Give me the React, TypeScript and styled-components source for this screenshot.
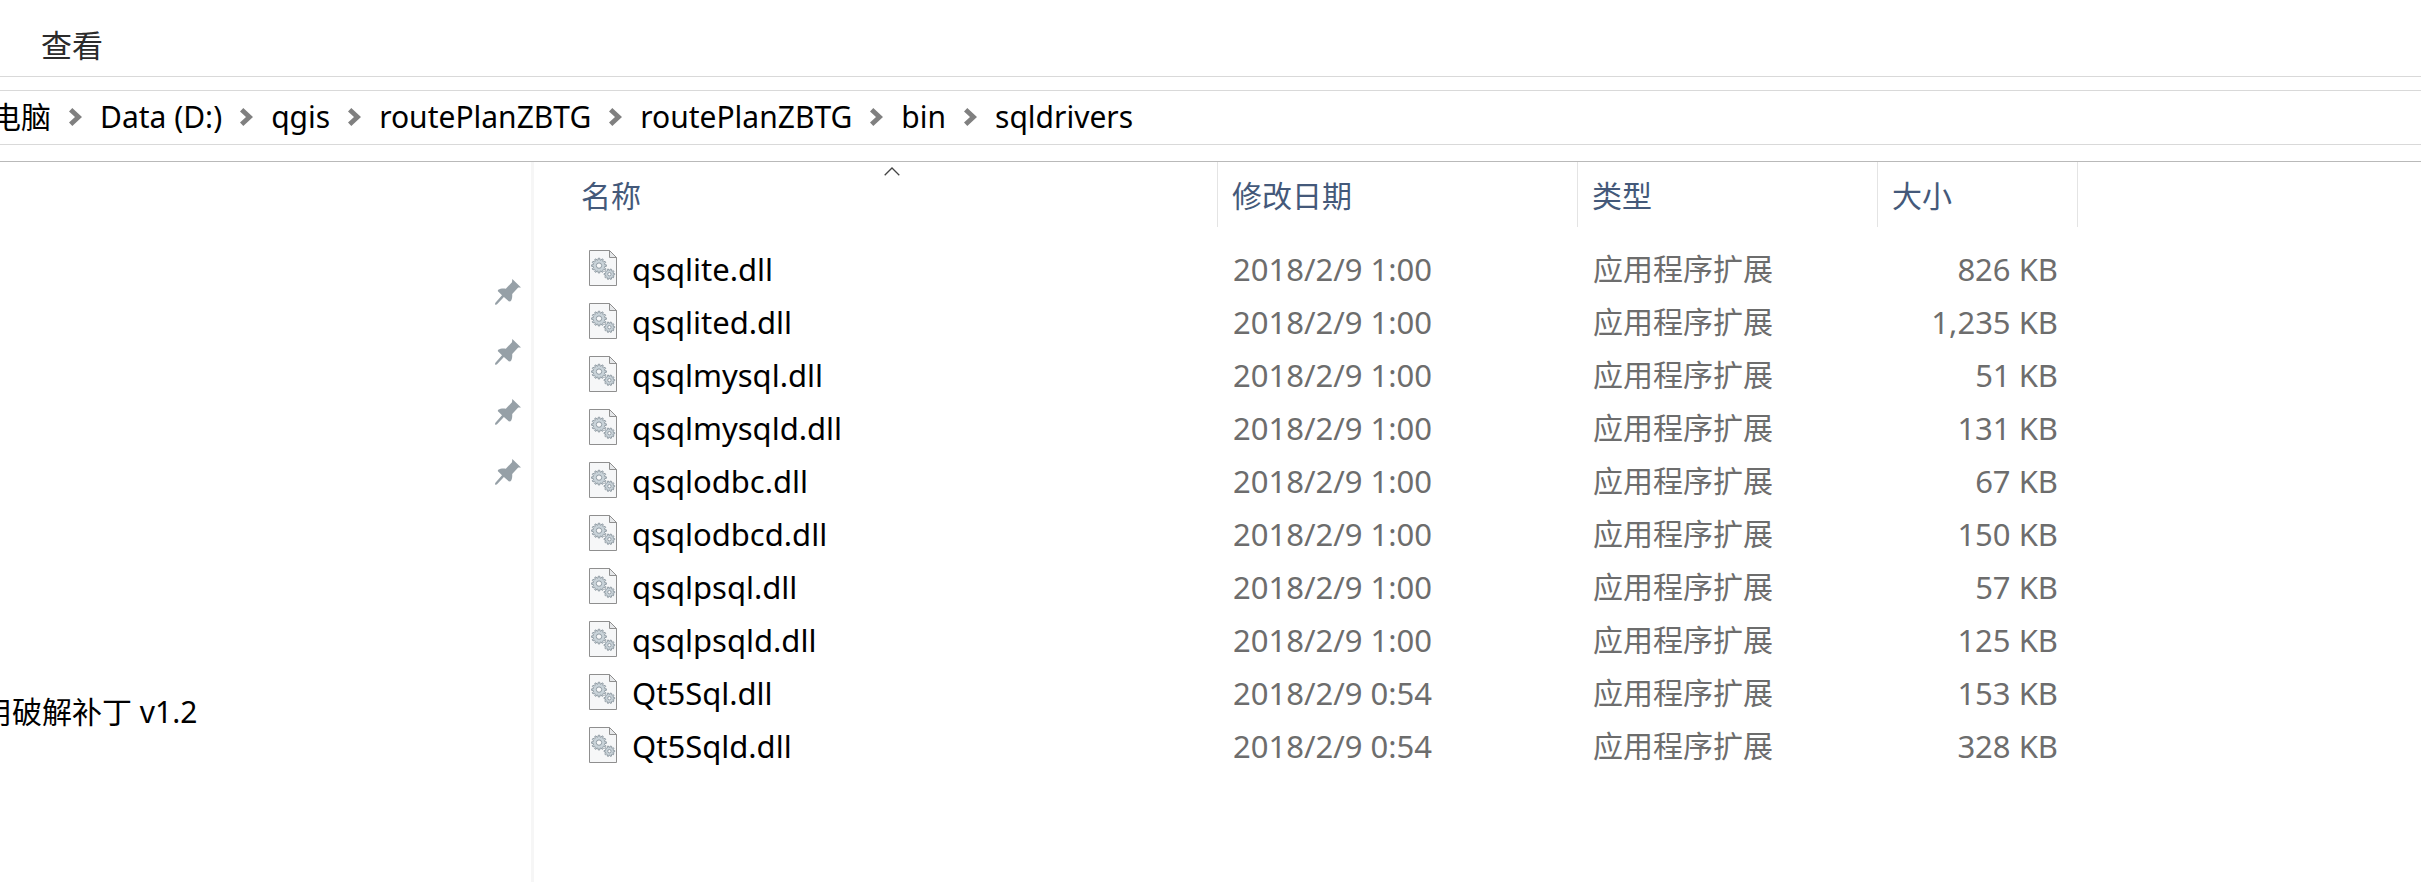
import React from 'react';
import styled, { createGlobalStyle } from 'styled-components';

const GlobalStyle = createGlobalStyle`
  * { box-sizing: border-box; }
  body {
    margin: 0;
    background: #ffffff;
    color: #000000;
    font-family: "Noto Sans", "Noto Sans CJK SC", sans-serif;
    font-size: 30px;
    line-height: 40px;
  }
  button {
    font: inherit;
    color: inherit;
    background: none;
    border: 0;
    padding: 0;
    margin: 0;
    cursor: pointer;
  }
`;

const Window = styled.div`
  display: flex;
  flex-direction: column;
  min-height: 100vh;
  overflow: hidden;
`;

const Ribbon = styled.div`
  display: flex;
  align-items: center;
  height: 77px;
  padding: 14px 41px 0;
  border-bottom: 1px solid #d9d9d9;
  color: #2b2b2b;
  font-size: 31px;
`;

const AddressBar = styled.nav`
  margin-top: 13px;
  border: solid #d9d9d9;
  border-width: 1px 0;
`;

const Crumbs = styled.ol`
  display: flex;
  align-items: center;
  gap: 18px;
  height: 53px;
  margin: 0 0 0 -9px;
  padding: 0 0 2px;
  list-style: none;
`;

const Crumb = styled.li`
  display: flex;
  align-items: center;
  gap: 18px;
  white-space: nowrap;
`;

const CrumbLink = styled.a`
  color: inherit;
  text-decoration: none;
`;

const Body = styled.div`
  display: flex;
  flex: 1;
  margin-top: 16px;
  border-top: 1px solid #b9b9b9;
`;

const Sidebar = styled.aside`
  flex: none;
  width: 534px;
  padding: 100px 10px 0 0;
  border-right: 3px solid #f6f6f6;
`;

const QuickList = styled.ul`
  margin: 0;
  padding: 0;
  list-style: none;
`;

const QuickItem = styled.li`
  display: flex;
  align-items: center;
  justify-content: space-between;
  height: 60px;
`;

const QuickLabel = styled.span`
  margin-left: -18px;
  white-space: nowrap;
`;

const Content = styled.main`
  flex: 1;
  padding-left: 33px;
`;

const FileTable = styled.table`
  width: 1511px;
  table-layout: fixed;
  border-collapse: collapse;
`;

const Col = styled.col<{ $width: number }>`
  width: ${(p) => p.$width}px;
`;

const HeadCell = styled.th`
  padding: 0 0 15px;
  font-weight: 400;
`;

const HeadButton = styled.button`
  position: relative;
  display: block;
  width: 100%;
  height: 65px;
  padding: 2px 14px 0;
  border-right: 1px solid #e4e4e4;
  color: #44597a;
  text-align: left;
`;

const SortMark = styled.svg`
  position: absolute;
  top: 5px;
  left: 50%;
  margin-left: -8px;
`;

const Cell = styled.td<{ $align?: 'right' }>`
  height: 53px;
  padding: 0 20px 0 15px;
  color: #6d6d6d;
  text-align: ${(p) => p.$align ?? 'left'};
  font-size: 31px;
  white-space: nowrap;
`;

const TypeCell = styled(Cell)`
  font-size: 30px;
`;

const FileName = styled.div`
  display: flex;
  align-items: center;
  gap: 15px;
  padding-left: 7px;
  color: #000000;
`;

const FileIcon = styled.svg`
  flex: none;
  margin-bottom: 2px;
`;

const Chevron = () => (
  <svg width="13" height="18" viewBox="0 0 13 18" aria-hidden="true">
    <path d="M0 3.5 3.3 0 13 9 3.3 18 0 14.5 6 9Z" fill="#808080" />
  </svg>
);

const Pin = () => (
  <svg width="26" height="26" viewBox="0 0 26 26" aria-hidden="true">
    <path
      d="M17.3 0 26 8.5 23.2 8.6 17.2 15 C17.4 18 17 20.6 15.6 22.3L14 22.4 8.9 18 1.8 25.6 0 25.8 0.2 24 7 16.2 2.7 12 3.2 10.8 C5.5 9.4 8 9.2 10.8 9.7L17 3.2Z"
      fill="#96a0a7"
    />
  </svg>
);

const gearPath = (cx: number, cy: number, outer: number, inner: number, teeth: number) => {
  const step = (Math.PI * 2) / teeth;
  const at = (r: number, a: number) =>
    `${(cx + r * Math.cos(a)).toFixed(2)} ${(cy + r * Math.sin(a)).toFixed(2)}`;
  const points: string[] = [];
  for (let i = 0; i < teeth; i += 1) {
    const a = i * step;
    points.push(
      at(inner, a - step * 0.3),
      at(outer, a - step * 0.2),
      at(outer, a + step * 0.2),
      at(inner, a + step * 0.3),
    );
  }
  return `M${points.join('L')}Z`;
};

const bigGear = gearPath(10, 15.6, 7.4, 5.8, 12);
const smallGear = gearPath(20.4, 24.2, 5.3, 4, 10);

const DllIcon = () => (
  <FileIcon width="28" height="36" viewBox="0 0 28 36" aria-hidden="true">
    <path d="M0.5 0.5H20.5L27.5 7.5V35.5H0.5Z" fill="#f6f7f8" stroke="#8f8f8f" />
    <path d="M20.5 0.5V7.5H27.5Z" fill="#e6e8ea" stroke="#8f8f8f" strokeLinejoin="round" />
    <path d={bigGear} fill="#c9d3d9" stroke="#929da5" strokeWidth="1" />
    <circle cx="10" cy="15.6" r="2.7" fill="#f8f9fa" stroke="#929da5" strokeWidth="1" />
    <path d={smallGear} fill="#c9d3d9" stroke="#929da5" strokeWidth="1" />
    <circle cx="20.4" cy="24.2" r="1.7" fill="#f8f9fa" stroke="#929da5" strokeWidth="1" />
  </FileIcon>
);

const crumbs = ['电脑', 'Data (D:)', 'qgis', 'routePlanZBTG', 'routePlanZBTG', 'bin', 'sqldrivers'];

const quickItems: { label?: string; pinned?: boolean }[] = [
  { pinned: true },
  { pinned: true },
  { pinned: true },
  { pinned: true },
  {},
  {},
  {},
  { label: '用破解补丁 v1.2' },
];

const columns = [
  { title: '名称', width: 651, sorted: true },
  { title: '修改日期', width: 360 },
  { title: '类型', width: 300 },
  { title: '大小', width: 200 },
];

const files = [
  { name: 'qsqlite.dll', date: '2018/2/9 1:00', size: '826 KB' },
  { name: 'qsqlited.dll', date: '2018/2/9 1:00', size: '1,235 KB' },
  { name: 'qsqlmysql.dll', date: '2018/2/9 1:00', size: '51 KB' },
  { name: 'qsqlmysqld.dll', date: '2018/2/9 1:00', size: '131 KB' },
  { name: 'qsqlodbc.dll', date: '2018/2/9 1:00', size: '67 KB' },
  { name: 'qsqlodbcd.dll', date: '2018/2/9 1:00', size: '150 KB' },
  { name: 'qsqlpsql.dll', date: '2018/2/9 1:00', size: '57 KB' },
  { name: 'qsqlpsqld.dll', date: '2018/2/9 1:00', size: '125 KB' },
  { name: 'Qt5Sql.dll', date: '2018/2/9 0:54', size: '153 KB' },
  { name: 'Qt5Sqld.dll', date: '2018/2/9 0:54', size: '328 KB' },
];

export default function App() {
  return (
    <Window lang="zh-CN">
      <GlobalStyle />
      <Ribbon>
        <button type="button">查看</button>
      </Ribbon>
      <AddressBar>
        <Crumbs>
          {crumbs.map((name, i) => (
            <Crumb key={i}>
              {i > 0 && <Chevron />}
              <CrumbLink href="#">{name}</CrumbLink>
            </Crumb>
          ))}
        </Crumbs>
      </AddressBar>
      <Body>
        <Sidebar>
          <QuickList>
            {quickItems.map((item, i) => (
              <QuickItem key={i}>
                <QuickLabel>{item.label}</QuickLabel>
                {item.pinned && <Pin />}
              </QuickItem>
            ))}
          </QuickList>
        </Sidebar>
        <Content>
          <FileTable>
            <colgroup>
              {columns.map((c) => (
                <Col key={c.title} $width={c.width} />
              ))}
            </colgroup>
            <thead>
              <tr>
                {columns.map((c) => (
                  <HeadCell key={c.title} scope="col" aria-sort={c.sorted ? 'ascending' : undefined}>
                    <HeadButton type="button">
                      {c.title}
                      {c.sorted && (
                        <SortMark width="16" height="9" viewBox="0 0 16 9" aria-hidden="true">
                          <path d="M0.7 8.3 8 1 15.3 8.3" fill="none" stroke="#444444" strokeWidth="1.3" />
                        </SortMark>
                      )}
                    </HeadButton>
                  </HeadCell>
                ))}
              </tr>
            </thead>
            <tbody>
              {files.map((f) => (
                <tr key={f.name}>
                  <Cell>
                    <FileName>
                      <DllIcon />
                      {f.name}
                    </FileName>
                  </Cell>
                  <Cell>{f.date}</Cell>
                  <TypeCell>应用程序扩展</TypeCell>
                  <Cell $align="right">{f.size}</Cell>
                </tr>
              ))}
            </tbody>
          </FileTable>
        </Content>
      </Body>
    </Window>
  );
}
